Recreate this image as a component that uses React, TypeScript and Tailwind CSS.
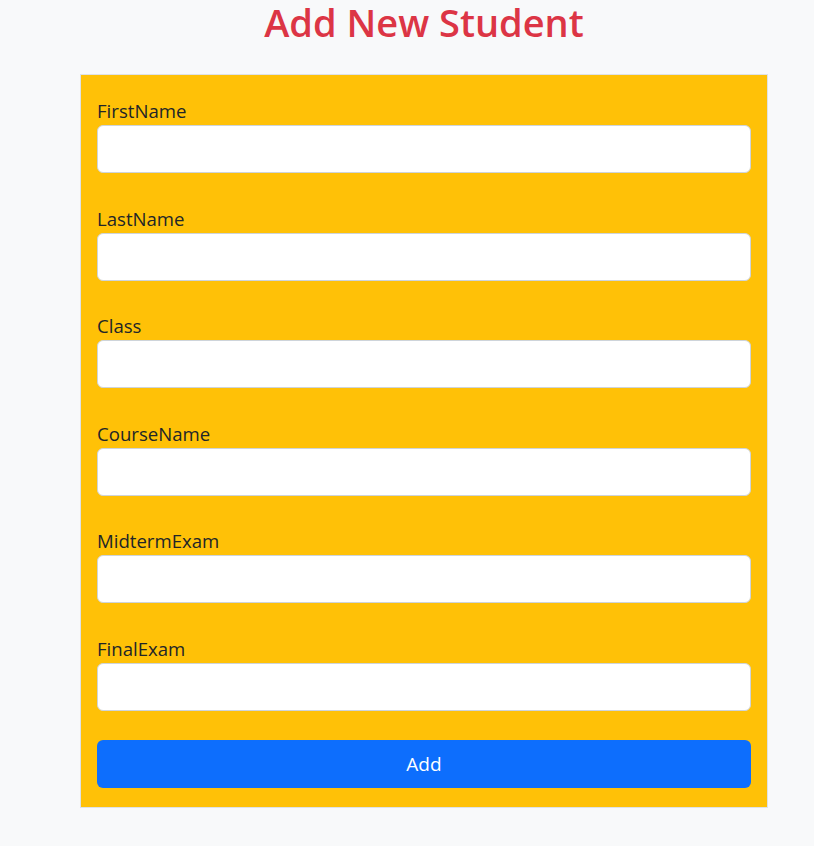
import React from "react";

const fields = ["FirstName", "LastName", "Class", "CourseName", "MidtermExam", "FinalExam"];

export default function App() {
  return (
    <div
      className="min-h-screen w-full bg-[#f8f9fa] text-[#212529]"
      style={{ fontFamily: '"Open Sans", "Noto Sans", sans-serif' }}
    >
      <div className="ml-[80px] w-[688px]">
        <h1 className="pt-[1px] text-center text-[38px] font-semibold leading-[42px] text-[#dc3545]">
          Add New Student
        </h1>
        <form className="mt-[31px] border border-[#dee2e6] bg-[#ffc107] px-4 pt-[22px] pb-[19px]">
          {fields.map((f) => (
            <div key={f} className="mb-[31.6px]">
              <label className="block text-[18.6px] leading-[28px]">{f}</label>
              <input
                type="text"
                className="block h-[48px] w-full rounded-md border border-[#ced4da] bg-white px-4 text-[20px] outline-none"
              />
            </div>
          ))}
          <button
            type="button"
            className="mt-[-2.6px] block h-[48px] w-full rounded-md bg-[#0d6efd] text-[19px] text-white"
          >
            Add
          </button>
        </form>
      </div>
    </div>
  );
}
